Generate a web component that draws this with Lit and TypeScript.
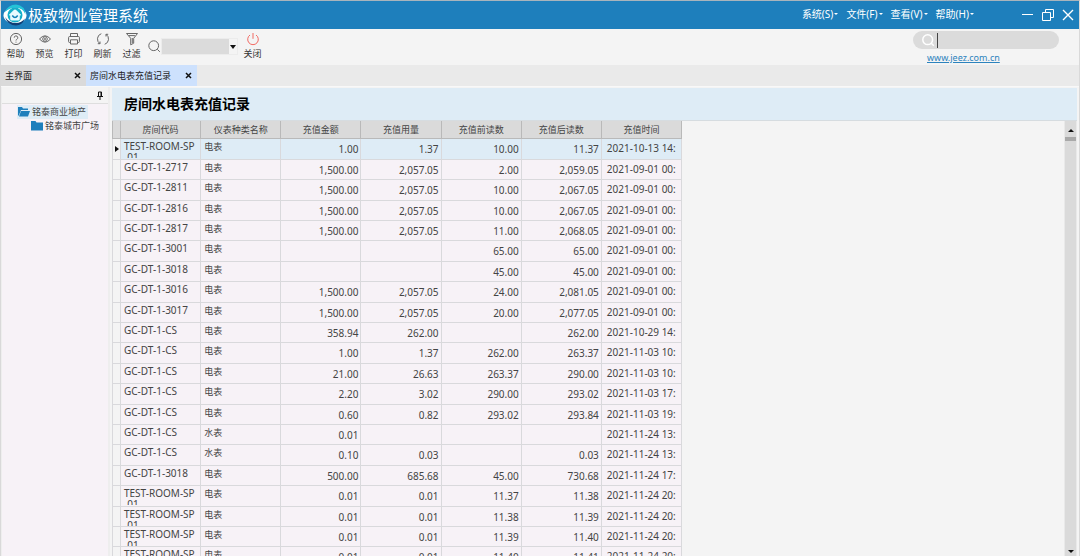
import { LitElement, html, svg, css } from "lit";
import { customElement, property, state } from "lit/decorators.js";

type Row = [code: string, kind: string, amount: string, usage: string, before: string, after: string, time: string];

const COLUMNS = ["房间代码", "仪表种类名称", "充值金额", "充值用量", "充值前读数", "充值后读数", "充值时间"];

const ROWS: Row[] = [
  ["TEST-ROOM-SP\n-01", "电表", "1.00", "1.37", "10.00", "11.37", "2021-10-13 14:"],
  ["GC-DT-1-2717", "电表", "1,500.00", "2,057.05", "2.00", "2,059.05", "2021-09-01 00:"],
  ["GC-DT-1-2811", "电表", "1,500.00", "2,057.05", "10.00", "2,067.05", "2021-09-01 00:"],
  ["GC-DT-1-2816", "电表", "1,500.00", "2,057.05", "10.00", "2,067.05", "2021-09-01 00:"],
  ["GC-DT-1-2817", "电表", "1,500.00", "2,057.05", "11.00", "2,068.05", "2021-09-01 00:"],
  ["GC-DT-1-3001", "电表", "", "", "65.00", "65.00", "2021-09-01 00:"],
  ["GC-DT-1-3018", "电表", "", "", "45.00", "45.00", "2021-09-01 00:"],
  ["GC-DT-1-3016", "电表", "1,500.00", "2,057.05", "24.00", "2,081.05", "2021-09-01 00:"],
  ["GC-DT-1-3017", "电表", "1,500.00", "2,057.05", "20.00", "2,077.05", "2021-09-01 00:"],
  ["GC-DT-1-CS", "电表", "358.94", "262.00", "", "262.00", "2021-10-29 14:"],
  ["GC-DT-1-CS", "电表", "1.00", "1.37", "262.00", "263.37", "2021-11-03 10:"],
  ["GC-DT-1-CS", "电表", "21.00", "26.63", "263.37", "290.00", "2021-11-03 10:"],
  ["GC-DT-1-CS", "电表", "2.20", "3.02", "290.00", "293.02", "2021-11-03 17:"],
  ["GC-DT-1-CS", "电表", "0.60", "0.82", "293.02", "293.84", "2021-11-03 19:"],
  ["GC-DT-1-CS", "水表", "0.01", "", "", "", "2021-11-24 13:"],
  ["GC-DT-1-CS", "水表", "0.10", "0.03", "", "0.03", "2021-11-24 13:"],
  ["GC-DT-1-3018", "电表", "500.00", "685.68", "45.00", "730.68", "2021-11-24 17:"],
  ["TEST-ROOM-SP\n-01", "电表", "0.01", "0.01", "11.37", "11.38", "2021-11-24 20:"],
  ["TEST-ROOM-SP\n-01", "电表", "0.01", "0.01", "11.38", "11.39", "2021-11-24 20:"],
  ["TEST-ROOM-SP\n-01", "电表", "0.01", "0.01", "11.39", "11.40", "2021-11-24 20:"],
  ["TEST-ROOM-SP\n-01", "电表", "0.01", "0.01", "11.40", "11.41", "2021-11-24 20:"],
];

const GLYPHS: Record<string, unknown> = {
  help: svg`<circle cx="8" cy="8" r="5.6"/><path d="M6.2 6.7a1.8 1.8 0 1 1 2.6 1.6c-.6.3-.8.6-.8 1.2M8 10.7v.9"/>`,
  eye: svg`<path d="M2.5 8Q8 1.6 13.5 8 8 14.4 2.5 8z"/><circle cx="8" cy="8" r="2.3"/><circle cx="8" cy="8" r=".6"/>`,
  print: svg`<path d="M4.500 5.500V2.500h7v3M4.500 11.500H3.600q-1 0-1-1v-4q0-1 1-1h8.800q1 0 1 1v4q0 1-1 1h-.9M4.500 8.800h7v4.200h-7z"/>`,
  refresh: svg`<path d="M6.300 2.700A5.600 5.600 0 0 0 5 12.700M5 12.700H2.800M5 12.700v-2.200M9.700 13.300A5.600 5.600 0 0 0 11 3.300M11 3.300h2.200M11 3.300v2.200"/>`,
  filter: svg`<path d="M2.500 2.500h11L9.700 7.300v4.900l-3 1.600V7.300zM4.600 4.600h6.300M8.300 7v5"/>`,
  search: svg`<circle cx="7.700" cy="7.700" r="4.900"/><path d="M11.300 11.300l2.500 2.500"/>`,
  power: svg`<path d="M5 4a5.300 5.300 0 1 0 6 0M8 2v5.800"/>`,
};

@customElement("ui-icon")
export class UiIcon extends LitElement {
  @property() name = "";
  static styles = css`
    :host { display: block; flex: none; width: 16px; height: 16px; color: #666; stroke-width: 1; }
    .glyph { display: block; width: 16px; height: 16px; fill: none; stroke: currentColor; }
  `;
  render() {
    return html`<svg class="glyph" viewBox="0 0 16 16" aria-hidden="true">${GLYPHS[this.name]}</svg>`;
  }
}

@customElement("app-root")
export class AppRoot extends LitElement {
  @state() private selected = 0;

  static styles = css`
    :host {
      display: flex;
      flex-direction: column;
      height: 100vh;
      overflow: hidden;
      box-sizing: border-box;
      border: 1px solid #d9d9d9;
      border-top-color: #a9b4bc;
      border-bottom: 0;
      background: #f4f4f4;
      color: #444;
      font: 9px/12px "Noto Sans", "Noto Sans CJK SC", sans-serif;
    }
    * { box-sizing: border-box; }
    button, input, select { font: inherit; color: inherit; border: 0; padding: 0; margin: 0; background: none; outline: none; }
    h1, h2 { margin: 0; }

    .titlebar { display: flex; align-items: center; flex: none; height: 28px; padding: 0 5px 0 2px; background: #1e7fbc; color: #fff; }
    .logo { width: 24px; height: 24px; margin-right: 1px; }
    .brand { flex: 1; font-size: 15px; line-height: 24px; font-weight: 400; }
    .menus { display: flex; gap: 8px; margin-right: 48px; padding-bottom: 3px; font-size: 10px; }
    .menu { display: flex; align-items: center; gap: 1px; }
    .caret { border: 2px solid transparent; border-top-color: currentColor; border-bottom: 0; }
    .window { display: flex; gap: 8px; }
    .window svg { display: block; width: 12px; height: 12px; fill: none; stroke: #fff; }

    .toolbar { display: flex; flex: none; height: 36px; padding: 2px 20px 0 0; }
    .tool { display: flex; flex-direction: column; align-items: center; width: 29px; gap: 1px; color: #333; }
    .tool .close { color: #f26a63; }
    .lookup { display: flex; align-items: center; height: 30px; }
    .lookup ui-icon { width: 15px; }
    .combo { appearance: none; width: 77px; height: 17px; border: 1px solid #ececec; background: linear-gradient(90deg, #dbdbdb 67px, #f4f4f4 67px); }
    .combo-wrap { position: relative; display: flex; }
    .combo-wrap .drop { position: absolute; right: 2px; top: 7px; border: 3px solid transparent; border-top: 4px solid #111; border-bottom: 0; pointer-events: none; }
    .site { display: flex; flex-direction: column; margin-left: auto; }
    .search { display: flex; align-items: center; width: 146px; height: 18px; padding-left: 7px; border-radius: 9px; background: #dbdbdb; }
    .search ui-icon { color: #fff; stroke-width: 1.5; }
    .search input { flex: 1; min-width: 0; height: 15px; margin-left: 1px; border-left: 1px solid #444; color: #444; }
    .link { margin: 3px 0 0 14px; color: #2c83bd; }

    .tabs { display: flex; flex: none; height: 22px; background: #eaeaea; border-bottom: 1px solid #f8f8f8; }
    .tab { display: flex; align-items: center; justify-content: space-between; width: 85px; padding: 0 5px 0 4px; background: #dadada; color: #222; }
    .tab.active { width: 111px; background: #cde1fd; }
    .x { display: block; width: 7px; height: 7px; stroke: #111; stroke-width: 1.5; }

    .body { display: flex; flex: 1; min-height: 0; }
    .side { display: flex; flex-direction: column; width: 109px; flex: none; padding: 0 2px 0 1px; background: #eee; }
    .pin { display: flex; justify-content: flex-end; flex: none; height: 17px; padding: 4px 4px 0 0; background: #f4f4f4; border-bottom: 1px solid #dedede; }
    .pin svg { width: 8px; height: 9px; }
    .tree { flex: 1; padding: 1px 0 0 15px; background: #f7f2f7; }
    .node { display: flex; align-items: center; width: max-content; height: 14px; gap: 2px; padding: 0 2px 0 1px; }
    .node.open { background: #deecf6; }
    .node.child { margin-left: 13px; }
    .node svg { width: 12px; height: 10px; fill: #1e7fbc; }

    .main { display: flex; flex-direction: column; flex: 1; min-width: 0; margin: 1px 2px 0; }
    .heading { flex: none; height: 32px; padding-left: 12px; background: #deecf6; color: #000; font-size: 14px; line-height: 32px; font-weight: 700; }
    .sheet { display: flex; flex: 1; min-height: 0; border-top: 1px solid #d6dce0; }
    .scroller { flex: 1; min-width: 0; overflow: hidden; }
    table { border-collapse: separate; border-spacing: 0; table-layout: fixed; width: 570px; }
    .mark { width: 9px; }
    th { height: 18px; padding: 0; border: solid #b9b9b9; border-width: 0 1px 1px 0; background: #dadada; font-weight: 400; }
    th:first-child { border-left-width: 1px; }
    td { height: 20px; padding: 0; border: solid #d9d9dc; border-width: 0 1px 1px 0; background: #f7f2f7; font-size: 10px; line-height: 12px; vertical-align: top; }
    tr:nth-child(5n + 1) td, tr:nth-child(5n + 3) td { height: 21px; }
    td:first-child { border-left: 1px solid #d9d9dc; background: #f4f4f4; }
    tr.current td:not(:first-child) { background: #deecf6; }
    .cell { height: 19px; padding: 2px 3px 0; overflow: hidden; }
    .code { line-height: 11px; white-space: pre; }
    .kind { font-size: 9px; }
    .number { padding-top: 4px; padding-right: 2px; text-align: right; }
    .time { padding: 3px 0 0 5px; white-space: nowrap; }
    .arrow { display: block; width: 0; margin: 7px 0 0 2px; border: 3px solid transparent; border-left: 4px solid #111; border-right: 0; }
    .scrollbar { display: flex; flex-direction: column; align-items: center; width: 13px; flex: none; padding: 8px 0 3px; border: solid #e9e9e9; border-width: 0 1px; background: #dadada; }
    .up { border: 3px solid transparent; border-bottom-color: #111; border-top: 0; }
    .thumb { width: 100%; height: 4px; margin-top: 5px; background: #a9a9a9; }
    .down { margin-top: auto; border: 3px solid transparent; border-top-color: #111; border-bottom: 0; }
  `;

  private tool(icon: string, label: string, tone = "") {
    return html`<button class="tool"><ui-icon class=${tone} name=${icon}></ui-icon><span>${label}</span></button>`;
  }

  private cross() {
    return html`<svg class="x" viewBox="0 0 7 7" aria-hidden="true"><path d="M1 1l5 5M6 1L1 6"/></svg>`;
  }

  render() {
    return html`
      <header class="titlebar">
        <svg class="logo" viewBox="0 0 24 24" aria-hidden="true">
          <ellipse cx="12" cy="12.500" rx="11.500" ry="8" fill="#fff"/>
          <path d="M2 9Q5 1.500 13 1.500q9 1 9.500 10Q20 4.500 12 4.500 6 5 2 9z" fill="#23c4d8"/>
          <path d="M2 14q3 8.500 11 8.500 6 0 9-7-4 4.500-9 4.500Q6 20 2 14z" fill="#123f75"/>
          <circle cx="12" cy="12" r="7.500" fill="#15afc8"/>
          <path d="M6 11.700Q11 6.500 12 6.500t6 5.200q.2 1-1.200.8V16q0 1.500-1.500 1.500H8.700q-1.500 0-1.500-1.500v-3.500q-1.400.2-1.200-.8z" fill="#e9fbff"/>
          <path d="M9.300 12.500q2.700 3.800 5.400 0" fill="none" stroke="#1282b7" stroke-width="1.500"/>
        </svg>
        <h1 class="brand">极致物业管理系统</h1>
        <nav class="menus">
          ${["系统(S)", "文件(F)", "查看(V)", "帮助(H)"].map((m) => html`<button class="menu">${m}<i class="caret"></i></button>`)}
        </nav>
        <div class="window">
          <button aria-label="最小化"><svg viewBox="0 0 12 12"><path d="M0 5.500h11"/></svg></button>
          <button aria-label="还原"><svg viewBox="0 0 12 12"><path d="M.5 3.500h8v8h-8zM3.500 3.500v-3h8v8h-3"/></svg></button>
          <button aria-label="关闭"><svg viewBox="0 0 12 12"><path d="M1 1l10 10M11 1L1 11" stroke-width="1.400"/></svg></button>
        </div>
      </header>

      <div class="toolbar">
        ${this.tool("help", "帮助")}${this.tool("eye", "预览")}${this.tool("print", "打印")}
        ${this.tool("refresh", "刷新")}${this.tool("filter", "过滤")}
        <div class="lookup">
          <ui-icon name="search"></ui-icon>
          <span class="combo-wrap"><select class="combo" aria-label="查找"></select><i class="drop"></i></span>
        </div>
        ${this.tool("power", "关闭", "close")}
        <div class="site">
          <label class="search"><ui-icon name="search"></ui-icon><input type="text" aria-label="搜索" /></label>
          <a class="link" href="http://www.jeez.com.cn">www.jeez.com.cn</a>
        </div>
      </div>

      <nav class="tabs">
        <button class="tab">主界面${this.cross()}</button>
        <button class="tab active">房间水电表充值记录${this.cross()}</button>
      </nav>

      <div class="body">
        <aside class="side">
          <div class="pin"><svg viewBox="0 0 8 9" aria-hidden="true"><path d="M2.500 5V1h3v4M1 5.500h6M4 5.500V9" fill="none" stroke="#111"/><path d="M4.500 1h1.500v4H4.500z" fill="#111"/></svg></div>
          <div class="tree">
            <div class="node open"><svg viewBox="0 0 12 10"><path d="M0 9V0h4l1 1.500h5V3H3L1 8zM3 4h9l-2 5.500H1z"/></svg>铭泰商业地产</div>
            <div class="node child"><svg viewBox="0 0 12 10"><path d="M0 9.500V0h4.500l1 1.500H12v8z"/></svg>铭泰城市广场</div>
          </div>
        </aside>
        <main class="main">
          <h2 class="heading">房间水电表充值记录</h2>
          <div class="sheet">
            <div class="scroller">
              <table>
                <colgroup><col class="mark" />${COLUMNS.map(() => html`<col />`)}</colgroup>
                <thead><tr><th></th>${COLUMNS.map((c) => html`<th scope="col">${c}</th>`)}</tr></thead>
                <tbody>
                  ${ROWS.map(([code, kind, amount, usage, before, after, time], i) => html`
                    <tr class=${i === this.selected ? "current" : ""} @click=${() => (this.selected = i)}>
                      <td>${i === this.selected ? html`<i class="arrow"></i>` : ""}</td>
                      <td><div class="cell code">${code}</div></td>
                      <td><div class="cell kind">${kind}</div></td>
                      ${[amount, usage, before, after].map((n) => html`<td><div class="cell number">${n}</div></td>`)}
                      <td><div class="cell time">${time}</div></td>
                    </tr>`)}
                </tbody>
              </table>
            </div>
            <div class="scrollbar"><i class="up"></i><i class="thumb"></i><i class="down"></i></div>
          </div>
        </main>
      </div>
    `;
  }
}
